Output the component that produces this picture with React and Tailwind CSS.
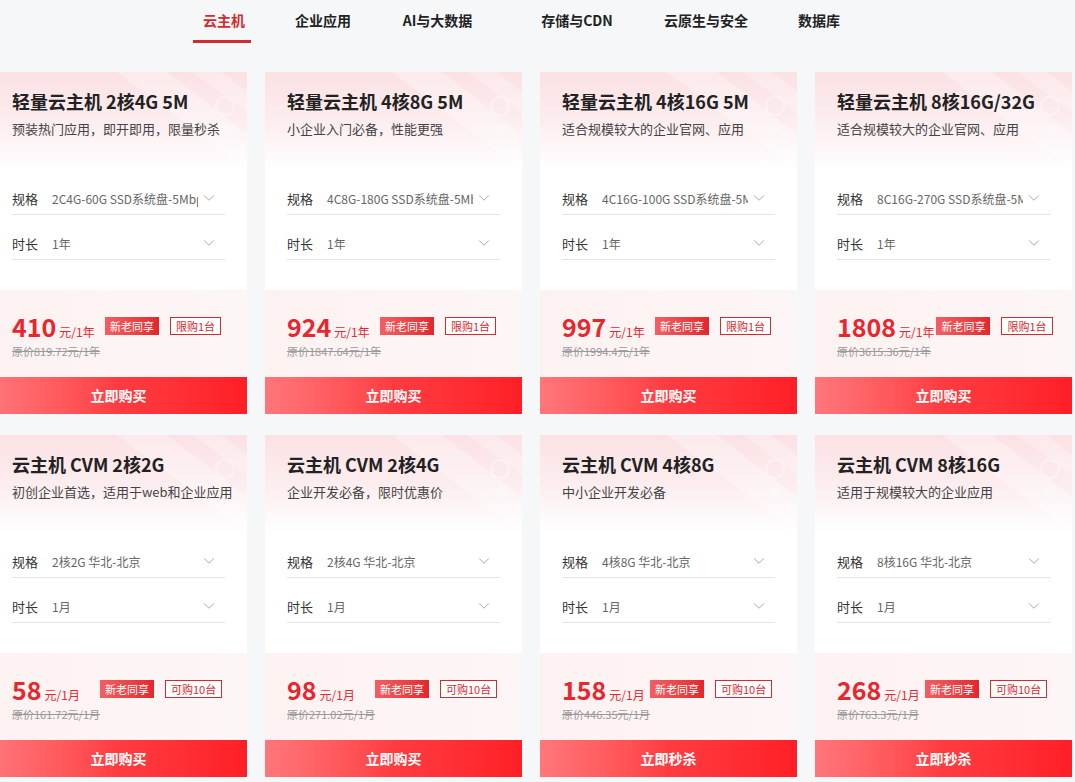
import { ChevronDown } from "lucide-react";

const tabs = [
  { name: "云主机", w: 42, ml: 0, active: true },
  { name: "企业应用", w: 56, ml: 50 },
  { name: "AI与大数据", w: 69, ml: 52 },
  { name: "存储与CDN", w: 70, ml: 70 },
  { name: "云原生与安全", w: 84, ml: 52 },
  { name: "数据库", w: 42, ml: 50 },
];

const products = [
  {
    title: "轻量云主机 2核4G 5M",
    desc: "预装热门应用，即开即用，限量秒杀",
    spec: "2C4G-60G SSD系统盘-5Mbps",
    time: "1年",
    price: "410",
    unit: "元/1年",
    origin: "原价819.72元/1年",
    limit: "限购1台",
    btn: "立即购买",
  },
  {
    title: "轻量云主机 4核8G 5M",
    desc: "小企业入门必备，性能更强",
    spec: "4C8G-180G SSD系统盘-5Mbps",
    time: "1年",
    price: "924",
    unit: "元/1年",
    origin: "原价1847.64元/1年",
    limit: "限购1台",
    btn: "立即购买",
  },
  {
    title: "轻量云主机 4核16G 5M",
    desc: "适合规模较大的企业官网、应用",
    spec: "4C16G-100G SSD系统盘-5Mbps",
    time: "1年",
    price: "997",
    unit: "元/1年",
    origin: "原价1994.4元/1年",
    limit: "限购1台",
    btn: "立即购买",
  },
  {
    title: "轻量云主机 8核16G/32G",
    desc: "适合规模较大的企业官网、应用",
    spec: "8C16G-270G SSD系统盘-5Mbps",
    time: "1年",
    price: "1808",
    unit: "元/1年",
    origin: "原价3615.36元/1年",
    limit: "限购1台",
    btn: "立即购买",
  },
  {
    title: "云主机 CVM 2核2G",
    desc: "初创企业首选，适用于web和企业应用",
    spec: "2核2G 华北-北京",
    time: "1月",
    price: "58",
    unit: "元/1月",
    origin: "原价161.72元/1月",
    limit: "可购10台",
    btn: "立即购买",
  },
  {
    title: "云主机 CVM 2核4G",
    desc: "企业开发必备，限时优惠价",
    spec: "2核4G 华北-北京",
    time: "1月",
    price: "98",
    unit: "元/1月",
    origin: "原价271.02元/1月",
    limit: "可购10台",
    btn: "立即购买",
  },
  {
    title: "云主机 CVM 4核8G",
    desc: "中小企业开发必备",
    spec: "4核8G 华北-北京",
    time: "1月",
    price: "158",
    unit: "元/1月",
    origin: "原价446.35元/1月",
    limit: "可购10台",
    btn: "立即秒杀",
  },
  {
    title: "云主机 CVM 8核16G",
    desc: "适用于规模较大的企业应用",
    spec: "8核16G 华北-北京",
    time: "1月",
    price: "268",
    unit: "元/1月",
    origin: "原价763.3元/1月",
    limit: "可购10台",
    btn: "立即秒杀",
  },
];

function SelectRow({ label, value }) {
  return (
    <div className="flex items-end h-[45px] pb-[7px] border-b border-[#e3e3e3]">
      <span className="w-[40px] shrink-0 text-[13px] leading-[16px] text-[#333]">{label}</span>
      <span className="flex-1 overflow-hidden whitespace-nowrap text-[12px] leading-[16px] text-[#666]">
        {value}
      </span>
      <ChevronDown size={18} strokeWidth={1} className="text-[#8a8a8a] ml-[2px] mr-[7px] shrink-0" />
    </div>
  );
}

function Card({ p, short }) {
  return (
    <div className="w-[257px] h-[342px] bg-white flex flex-col">
      {/* 头部 */}
      <div className="relative h-[98px] px-[22px] pt-[17px] bg-gradient-to-b from-[#fbe1e4] via-[#fcedef] to-white overflow-hidden">
        <svg className="absolute right-0 top-0" width="160" height="98" viewBox="0 0 160 98">
          <path d="M30 0 L80 0 L160 62 L160 98 Z" fill="#ffffff" opacity="0.3" />
          <path d="M105 0 L135 0 L160 20 L160 40 Z" fill="#ffffff" opacity="0.25" />
          <circle cx="138" cy="34" r="9" fill="none" stroke="#ffffff" strokeWidth="2.5" opacity="0.3" />
          <circle cx="138" cy="58" r="6" fill="#ffffff" opacity="0.25" />
        </svg>
        <div className="relative text-[18px] leading-[24px] font-bold text-[#222]">{p.title}</div>
        <div className="relative mt-[7px] whitespace-nowrap text-[13px] leading-[18px] text-[#444]">{p.desc}</div>
      </div>

      {/* 规格选择 */}
      <div className="px-[22px]">
        <SelectRow label="规格" value={p.spec} />
        <SelectRow label="时长" value={p.time} />
      </div>

      {/* 价格 */}
      <div className="mt-[30px] flex-1 px-[22px] pt-[22px] bg-gradient-to-r from-[#fdf2f2] to-[#fdf6f6]">
        <div className="flex items-center h-[28px]">
          <div
            className={`flex items-baseline shrink-0 whitespace-nowrap pr-[2px] ${
              short ? "min-w-[88px]" : "min-w-[93px]"
            }`}
          >
            <span className="text-[25px] leading-[28px] font-bold text-[#e8262d]">{p.price}</span>
            <span className="ml-[3px] text-[12px] text-[#e8262d]">{p.unit}</span>
          </div>
          <span className="h-[18px] px-[5px] flex items-center whitespace-nowrap text-[11px] text-white bg-gradient-to-r from-[#f25e63] to-[#e4252c]">
            新老同享
          </span>
          <span className="ml-[11px] h-[18px] px-[5px] flex items-center whitespace-nowrap text-[11px] text-[#d52a30] border border-[#d52a30] bg-white">
            {p.limit}
          </span>
        </div>
        <div className="mt-[3px] text-[11px] leading-[16px] text-[#999] line-through">{p.origin}</div>
      </div>

      <button className="h-[37px] w-full bg-gradient-to-r from-[#ff767b] via-[#ff3b41] to-[#ff1e25] text-white text-[14px] font-bold">
        {p.btn}
      </button>
    </div>
  );
}

export default function App() {
  return (
    <div
      className="min-h-[782px] w-[1075px] overflow-hidden bg-[#f6f7f9]"
      style={{ fontFamily: '"Noto Sans CJK SC", "Noto Sans", sans-serif' }}
    >
      {/* 顶部分类 */}
      <div className="flex pl-[203px] h-[44px]">
        {tabs.map((t) => (
          <div
            key={t.name}
            className="relative flex justify-center pt-[10px] whitespace-nowrap text-[14px] leading-[20px] font-bold"
            style={{ width: t.w, marginLeft: t.ml }}
          >
            <span className={t.active ? "text-[#d22a2f]" : "text-[#222]"}>{t.name}</span>
            {t.active && (
              <span className="absolute left-[-10px] right-[-6px] bottom-[1px] h-[3px] bg-[#d22a2f]" />
            )}
          </div>
        ))}
      </div>

      {/* 产品列表 */}
      <div className="mt-[28px] ml-[-10px] grid grid-cols-[repeat(4,257px)] gap-x-[18px] gap-y-[21px]">
        {products.map((p, i) => (
          <Card key={i} p={p} short={i >= 4} />
        ))}
      </div>
    </div>
  );
}
